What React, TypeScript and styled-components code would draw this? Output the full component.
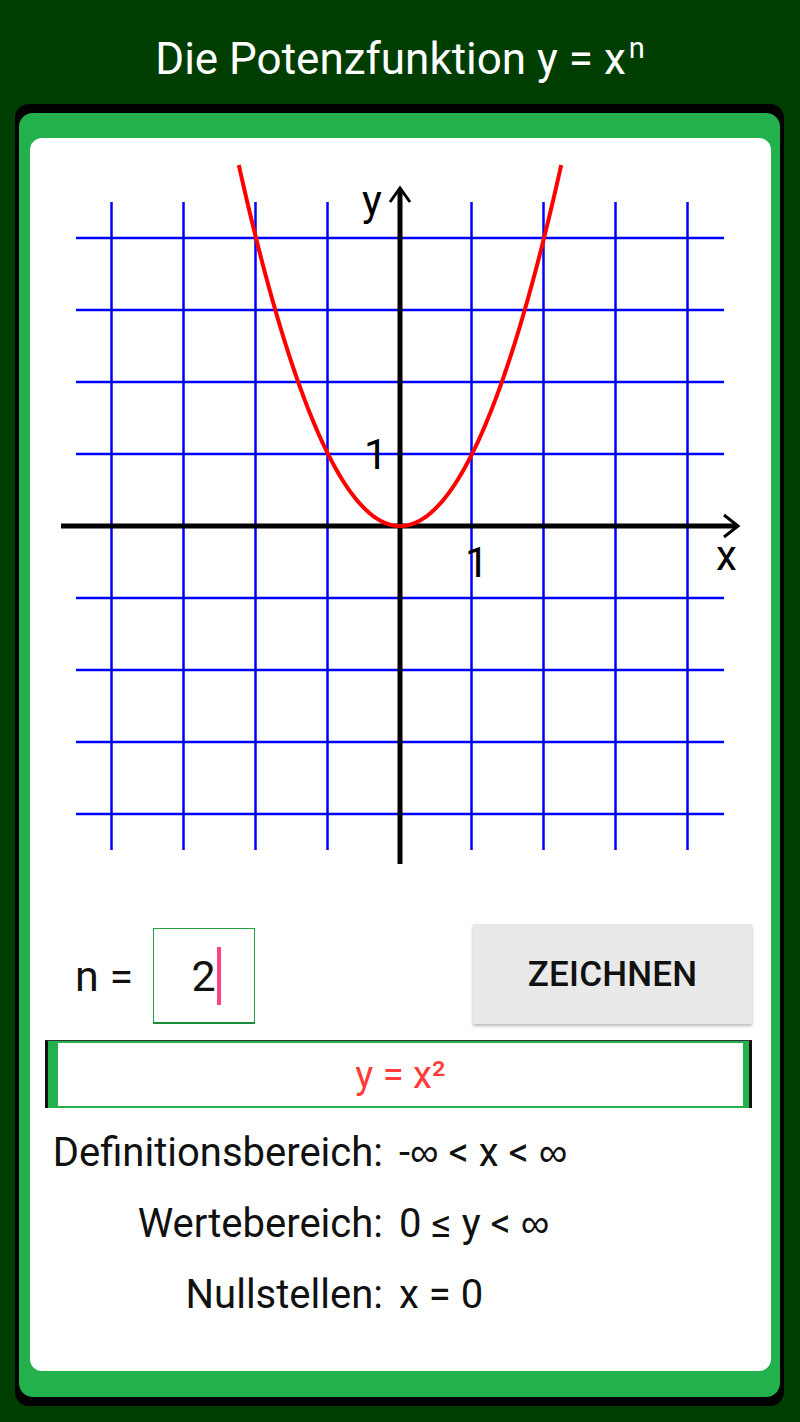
import React from "react";
import styled, { createGlobalStyle } from "styled-components";

const Global = createGlobalStyle`
  html, body { margin: 0; padding: 0; }
  body {
    background: #003d00;
    font-family: Roboto, "Noto Sans", "Liberation Sans", sans-serif;
    width: 800px;
    height: 1422px;
    overflow: hidden;
  }
`;

const Page = styled.div`
  width: 800px;
  height: 1422px;
  display: flex;
  flex-direction: column;
`;

const TitleBar = styled.header`
  height: 104px;
  display: flex;
  align-items: center;
  justify-content: center;
  color: #ffffff;
  font-size: 44px;
  padding-top: 14px;
  box-sizing: border-box;
`;

const Sup = styled.span`
  font-size: 29px;
  position: relative;
  top: -11px;
  margin-left: 3px;
`;

const ShadowFrame = styled.div`
  margin: 0 16px 0 15px;
  background: #000000;
  border-radius: 14px;
  padding: 9px 4px 9px 4px;
`;

const GreenFrame = styled.div`
  background: #23b14d;
  border-radius: 14px;
  padding: 25px 9px 26px 11px;
`;

const Panel = styled.div`
  background: #ffffff;
  border-radius: 12px;
  height: 1233px;
  display: flex;
  flex-direction: column;
  overflow: hidden;
`;

const GraphSvg = styled.svg`
  display: block;
  width: 741px;
  height: 786px;
  flex: none;
`;

const ControlRow = styled.div`
  height: 100px;
  display: flex;
  align-items: flex-end;
  padding: 0 19px 0 45px;
`;

const NLabel = styled.div`
  font-size: 43px;
  color: #111;
  width: 78px;
  height: 96px;
  display: flex;
  align-items: center;
`;

const InputBox = styled.div`
  width: 102px;
  height: 96px;
  box-sizing: border-box;
  border: 1.5px solid #22a046;
  border-bottom: 2px solid #1b8a3a;
  display: flex;
  align-items: center;
  justify-content: center;
  font-size: 43px;
  color: #111;
  padding-left: 4px;
`;

const Caret = styled.span`
  display: inline-block;
  width: 4px;
  height: 58px;
  background: #ff4081;
  margin-left: 1px;
`;

const Spacer = styled.div`
  flex: 1;
`;

const DrawButton = styled.button`
  width: 279px;
  height: 100px;
  border: none;
  background: #e8e9e8;
  box-shadow: 0 2px 3px rgba(0, 0, 0, 0.28);
  font-family: Roboto, "Noto Sans", "Liberation Sans", sans-serif;
  font-weight: 500;
  font-size: 35px;
  color: #111;
  letter-spacing: 0.2px;
  align-self: flex-start;
  padding: 0;
`;

const ResultOuter = styled.div`
  margin: 16px 19px 0 15px;
  border-left: 3px solid #111;
  border-right: 3px solid #111;
  border-top: 1px solid #333;
`;

const ResultBox = styled.div`
  height: 67px;
  box-sizing: border-box;
  border-style: solid;
  border-color: #23b14d;
  border-width: 2px 6px 2px 10px;
  display: flex;
  align-items: center;
  justify-content: center;
  color: #ff3b3b;
  font-size: 38px;
`;

const InfoList = styled.div`
  margin-top: 9px;
  display: grid;
  grid-template-columns: 353px 1fr;
  column-gap: 16px;
  grid-auto-rows: 71px;
  align-items: center;
  font-size: 40px;
  color: #111;
`;

const InfoLabel = styled.div`
  text-align: right;
  white-space: nowrap;
`;

const InfoValue = styled.div`
  text-align: left;
  white-space: nowrap;
`;

const Inf = styled.span`
  font-family: "Liberation Sans", Arial, sans-serif;
`;

const gridX = [111.5, 183.5, 255.5, 327.5, 471.5, 543.5, 615.5, 687.5];
const gridY = [238, 310, 382, 454, 598, 670, 742, 814];

function curvePath(): string {
  const pts: string[] = [];
  const tMax = Math.sqrt((526 - 165) / 72);
  const steps = 200;
  for (let i = 0; i <= steps; i++) {
    const t = -tMax + (2 * tMax * i) / steps;
    const x = 400 + 72 * t;
    const y = 526 - 72 * t * t;
    pts.push(`${i === 0 ? "M" : "L"}${x.toFixed(2)} ${y.toFixed(2)}`);
  }
  return pts.join(" ");
}

const Graph: React.FC = () => (
  <GraphSvg viewBox="30 138 741 786">
    {gridX.map((x) => (
      <line key={`v${x}`} x1={x} y1={202} x2={x} y2={850} stroke="#0000ff" strokeWidth={2.5} />
    ))}
    {gridY.map((y) => (
      <line key={`h${y}`} x1={76} y1={y} x2={724} y2={y} stroke="#0000ff" strokeWidth={2.5} />
    ))}
    <line x1={61} y1={526} x2={737} y2={526} stroke="#000" strokeWidth={5} />
    <line x1={400} y1={864} x2={400} y2={189} stroke="#000" strokeWidth={5} />
    <polyline points="724,515 738,526 724,537" fill="none" stroke="#000" strokeWidth={3} />
    <polyline points="390,202 400,188 410,202" fill="none" stroke="#000" strokeWidth={3} />
    <path d={curvePath()} fill="none" stroke="#ff0000" strokeWidth={4} />
    <g fontFamily="Roboto, 'Liberation Sans', sans-serif" fontSize={42} fill="#000">
      <text x={362} y={215}>y</text>
      <text x={364} y={469}>1</text>
      <text x={465} y={577}>1</text>
      <text x={716} y={570}>x</text>
    </g>
  </GraphSvg>
);

export default function App() {
  return (
    <Page>
      <Global />
      <TitleBar>
        Die Potenzfunktion y = x<Sup>n</Sup>
      </TitleBar>
      <ShadowFrame>
        <GreenFrame>
          <Panel>
            <Graph />
            <ControlRow>
              <NLabel>n =</NLabel>
              <InputBox>
                2<Caret />
              </InputBox>
              <Spacer />
              <DrawButton>ZEICHNEN</DrawButton>
            </ControlRow>
            <ResultOuter>
              <ResultBox>y = x²</ResultBox>
            </ResultOuter>
            <InfoList>
              <InfoLabel>Definitionsbereich:</InfoLabel>
              <InfoValue>
                -<Inf>∞</Inf> &lt; x &lt; <Inf>∞</Inf>
              </InfoValue>
              <InfoLabel>Wertebereich:</InfoLabel>
              <InfoValue>
                0 ≤ y &lt; <Inf>∞</Inf>
              </InfoValue>
              <InfoLabel>Nullstellen:</InfoLabel>
              <InfoValue>x = 0</InfoValue>
            </InfoList>
          </Panel>
        </GreenFrame>
      </ShadowFrame>
    </Page>
  );
}
